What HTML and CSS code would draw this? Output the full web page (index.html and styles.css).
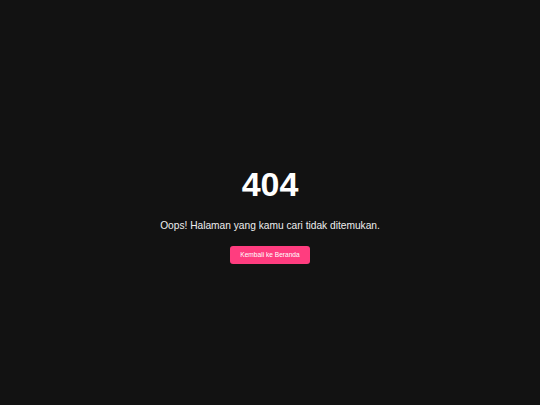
FILE: index.html
```html
<!DOCTYPE html>
<html lang="id">
<head>
<meta charset="utf-8">
<title>404</title>
<link rel="stylesheet" href="styles.css">
</head>
<body>
<main class="page">
  <h1 class="code">404</h1>
  <p class="message">Oops! Halaman yang kamu cari tidak ditemukan.</p>
  <a class="btn" href="#">Kembali ke Beranda</a>
</main>
</body>
</html>
```
FILE: styles.css
```css
html, body {
  margin: 0;
  padding: 0;
  background: #121212;
}
body {
  font-family: "Liberation Sans", Arial, sans-serif;
  color: #ffffff;
}
.page {
  min-height: 405px;
  display: flex;
  flex-direction: column;
  align-items: center;
  justify-content: center;
  text-align: center;
  padding-top: 23px;
  box-sizing: border-box;
}
.code {
  margin: 0;
  font-size: 34px;
  font-weight: 700;
  line-height: 1.2;
}
.message {
  margin: 14px 0 13px;
  font-size: 10.2px;
  line-height: 1.4;
  color: #eeeeee;
}
.btn {
  display: inline-block;
  background: #ff3d7f;
  color: #ffffff;
  text-decoration: none;
  font-size: 6.6px;
  padding: 4px 10.5px;
  border-radius: 3px;
  line-height: 10px;
}
```
